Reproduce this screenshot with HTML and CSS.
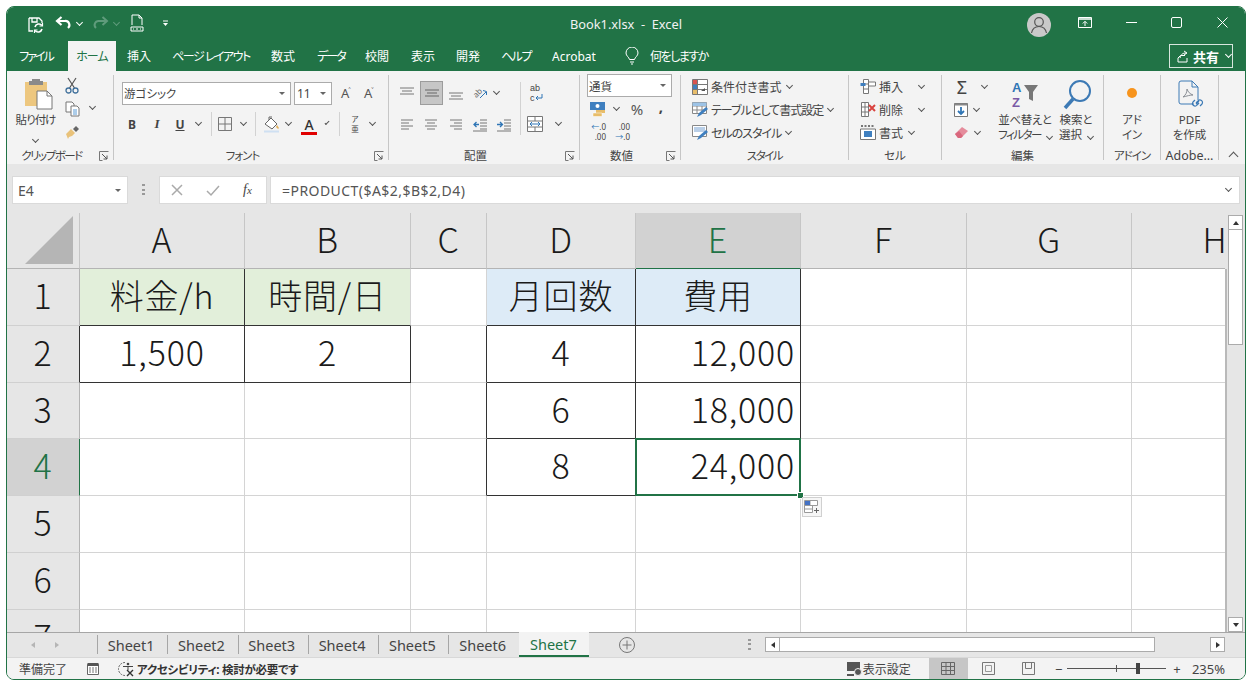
FILE: index.html
```html
<!DOCTYPE HTML>
<html lang="ja">
    <head>
        <meta charset="UTF-8">
        <title>Book1.xlsx - Excel</title>
        <link rel="stylesheet" href="styles.css">
    </head>
    <body>
        <svg class="defs" width="0" height="0">
            <symbol id="top" viewBox="0 0 16 16"><path d="M1 3h14M3 6h10M1 9h14" stroke="#777" fill="none"/></symbol>
            <symbol id="mid" viewBox="0 0 16 16"><path d="M1 5h14M3 8h10M1 11h14" stroke="#666" fill="none"/></symbol>
            <symbol id="bot" viewBox="0 0 16 16"><path d="M1 8h14M3 11h10M1 14h14" stroke="#777" fill="none"/></symbol>
            <symbol id="left" viewBox="0 0 16 16"><path d="M2 4h12M2 7h8M2 10h12M2 13h8" stroke="#777" fill="none"/></symbol>
            <symbol id="center" viewBox="0 0 16 16"><path d="M2 4h12M4 7h8M2 10h12M4 13h8" stroke="#777" fill="none"/></symbol>
            <symbol id="right" viewBox="0 0 16 16"><path d="M2 4h12M6 7h8M2 10h12M6 13h8" stroke="#777" fill="none"/></symbol>
            <symbol id="launch" viewBox="0 0 10 10"><path d="M.5 9.500v-9h9M.5 9.500h3" stroke="#777" fill="none"/><path d="M3 3l5 5M8 4.500V8H4.500" stroke="#555" fill="none"/></symbol>
        </svg>

        <div id="window">
            <!-- タイトルバー -->
            <header class="titlebar">
                <div class="qat">
                    <svg class="q-save" width="18" height="18" viewBox="0 0 18 18"><path d="M2 2h10l3 3v2M2 2v13h4M5 2v4h5V2" fill="none" stroke="#fff" stroke-width="1.300"/><path d="M8 11a4 4 0 0 1 7-1.500M15 13a4 4 0 0 1-7 1.500" fill="none" stroke="#fff" stroke-width="1.600"/><path d="M15.500 7v3h-3M7.500 17v-3h3" fill="none" stroke="#fff" stroke-width="1.200"/></svg>
                    <svg class="q-undo" width="17" height="14" viewBox="0 0 17 14"><path d="M3 5h7a4 4 0 0 1 3 7" fill="none" stroke="#fff" stroke-width="2.200"/><path d="M6.500 1L2 5l4.500 4" fill="none" stroke="#fff" stroke-width="2.200"/></svg>
                    <span class="chev white q-c1"></span>
                    <svg class="q-redo" width="17" height="14" viewBox="0 0 17 14"><path d="M14 5H7a4 4 0 0 0-3 7" fill="none" stroke="#5f9b7b" stroke-width="2"/><path d="M10.500 1L15 5l-4.500 4" fill="none" stroke="#5f9b7b" stroke-width="2"/></svg>
                    <span class="chev dim q-c2"></span>
                    <svg class="q-new" width="14" height="18" viewBox="0 0 14 18"><path d="M2 11V1h7l3 3v7M9 1v3h3" fill="none" stroke="#fff"/><path d="M1 13h12v4H1z" fill="none" stroke="#fff"/><path d="M3 15h1M6 15h2M10 15h1" stroke="#fff"/></svg>
                    <svg class="q-more" width="7" height="7" viewBox="0 0 7 7"><path d="M1 1h5" stroke="#fff"/><path d="M1 3h5L3.500 6z" fill="#fff"/></svg>
                </div>
                <div class="doc-title">Book1.xlsx&nbsp; -&nbsp; Excel</div>
                <div class="win-ctrl">
                    <svg class="avatar" width="24" height="24" viewBox="0 0 24 24"><circle cx="12" cy="12" r="12" fill="#c9c9c9"/><circle cx="12" cy="9" r="4.300" fill="none" stroke="#555" stroke-width="1.200"/><path d="M4.500 20c1-5 4-6.500 7.500-6.500s6.500 1.500 7.500 6.500" fill="none" stroke="#555" stroke-width="1.200"/></svg>
                    <svg class="c-disp" width="14" height="11" viewBox="0 0 14 11"><path d="M.5.500h13v10H.5z" fill="none" stroke="#fff"/><path d="M.5 2h13" stroke="#fff" stroke-width="1.500"/><path d="M7 9V4.500M4.800 6.500L7 4.300l2.200 2.200" fill="none" stroke="#fff"/></svg>
                    <svg class="c-min" width="11" height="11" viewBox="0 0 11 11"><path d="M0 5.500h11" stroke="#fff"/></svg>
                    <svg class="c-max" width="11" height="11" viewBox="0 0 11 11"><rect x=".5" y=".5" width="10" height="10" rx="1.500" fill="none" stroke="#fff"/></svg>
                    <svg class="c-close" width="11" height="11" viewBox="0 0 11 11"><path d="M.5.500l10 10M10.500.500l-10 10" stroke="#fff"/></svg>
                </div>
            </header>

            <!-- タブ -->
            <nav class="tabs">
                <span class="tab file k3">ファイル</span>
                <span class="tab on k1">ホーム</span>
                <span class="tab">挿入</span>
                <span class="tab k2">ページ レイアウト</span>
                <span class="tab">数式</span>
                <span class="tab k3">データ</span>
                <span class="tab">校閲</span>
                <span class="tab">表示</span>
                <span class="tab">開発</span>
                <span class="tab k2">ヘルプ</span>
                <span class="tab">Acrobat</span>
                <span class="tell">
                    <svg width="14" height="18" viewBox="0 0 14 18"><path d="M4.500 12.500C4 10 1 9 1 6a6 6 0 0 1 12 0c0 3-3 4-3.500 6.500z" fill="none" stroke="#fff"/><path d="M5 15h4M6 17h2" stroke="#fff"/></svg>
                    <span class="k2">何をしますか</span>
                </span>
                <span class="share">
                    <svg width="13" height="13" viewBox="0 0 13 13"><path d="M9 5.500H4.500L2 8v4h9V8" fill="none" stroke="#fff"/><path d="M4 8c1-4 3-5 6-5M8 1l3 2-3 2" fill="none" stroke="#fff"/></svg>
                    <b>共有</b>
                    <span class="chev white"></span>
                </span>
            </nav>

            <!-- リボン -->
            <section class="ribbon">
                <div class="group g-clip">
                    <div class="body">
                        <div class="paste">
                            <svg width="30" height="32" viewBox="0 0 30 32"><path d="M1 4h22v24H1z" fill="#edc77f"/><path d="M8 1h8v2h3v4H5V3h3z" fill="#8a8a8a"/><path d="M13 13h10l5 5v13H13z" fill="#fff" stroke="#777"/><path d="M23 13v5h5" fill="none" stroke="#777"/></svg>
                            <span class="k1">貼り付け</span>
                            <span class="chev"></span>
                        </div>
                        <div class="stack tools">
                            <svg width="14" height="17" viewBox="0 0 14 17"><path d="M3 1l6.500 10M11 1L4.500 11" stroke="#555" stroke-width="1.200"/><circle cx="3.500" cy="13.500" r="2.500" fill="none" stroke="#41719c" stroke-width="1.300"/><circle cx="10.500" cy="13.500" r="2.500" fill="none" stroke="#41719c" stroke-width="1.300"/></svg>
                            <svg width="15" height="16" viewBox="0 0 15 16"><path d="M1 1h6l2 2v8H1z" fill="#fff" stroke="#777"/><path d="M6 5h6l2 2v8H6z" fill="#fff" stroke="#777"/><path d="M8 9h4M8 11h4M8 13h4" stroke="#5b9bd5"/></svg>
                            <svg width="15" height="14" viewBox="0 0 15 14"><path d="M1 9l5-5 4 4-3 3-3 1-1 2z" fill="#e9c27a"/><path d="M8 4l3-3 3 3-3 3z" fill="#666"/></svg>
                        </div>
                        <div class="copy-more"><span class="chev"></span></div>
                    </div>
                    <div class="label"><span class="k2">クリップボード</span><svg class="launch"><use href="#launch"/></svg></div>
                </div>

                <div class="group g-font">
                    <div class="body">
                        <div class="font-r1">
                            <div class="combo font-name">游ゴシック<i class="down"></i></div>
                            <div class="combo font-size">11<i class="down"></i></div>
                            <span class="slot grow">A<sup>˄</sup></span>
                            <span class="slot shrink">A<sup>˅</sup></span>
                        </div>
                        <div class="font-r2">
                            <b class="slot fmt">B</b>
                            <i class="slot fmt italic">I</i>
                            <u class="slot fmt">U</u>
                            <span class="slot"><span class="chev"></span></span>
                            <span class="slot"><span class="vsep"></span></span>
                            <span class="slot"><svg width="16" height="16" viewBox="0 0 16 16"><path d="M1.500 1.500h13v13h-13zM8 1.500v13M1.500 8h13" fill="none" stroke="#777"/></svg></span>
                            <span class="slot"><span class="chev"></span></span>
                            <span class="slot"><span class="vsep"></span></span>
                            <span class="slot"><svg width="18" height="18" viewBox="0 0 18 18"><path d="M2 9l6-6 6 6-5 5z" fill="#fff" stroke="#666"/><path d="M6 5V2h3" fill="none" stroke="#666"/><path d="M14 10l2 3-1 1-2-2z" fill="#e3b15c"/><path d="M1 15.500h15v2H1z" fill="#cfe0f2"/></svg></span>
                            <span class="slot"><span class="chev"></span></span>
                            <span class="slot color-a">A<em></em></span>
                            <span class="slot"><span class="chev"></span></span>
                            <span class="slot"><span class="vsep"></span></span>
                            <span class="slot phon"><small>ア</small><small>亜</small></span>
                            <span class="slot"><span class="chev"></span></span>
                        </div>
                    </div>
                    <div class="label"><span class="k1">フォント</span><svg class="launch"><use href="#launch"/></svg></div>
                </div>

                <div class="group g-align">
                    <div class="body">
                        <div class="align-left">
                            <div class="align-r1">
                                <svg class="slot16"><use href="#top"/></svg>
                                <span class="sel"><svg class="slot16"><use href="#mid"/></svg></span>
                                <svg class="slot16"><use href="#bot"/></svg>
                                <svg class="slot16" viewBox="0 0 16 16"><text class="orient" transform="rotate(-45 7 9)" x="2" y="10">ab</text><path d="M8 13l6-6M11 5.500l3.500 1V10" fill="none" stroke="#2f75b5"/></svg>
                                <span class="slot"><span class="chev"></span></span>
                            </div>
                            <div class="align-r2">
                                <svg class="slot16"><use href="#left"/></svg>
                                <svg class="slot16"><use href="#center"/></svg>
                                <svg class="slot16"><use href="#right"/></svg>
                                <svg class="slot16" viewBox="0 0 16 16"><path d="M8 4h7M8 7h7M8 10h7M8 13h7M1 15h14" stroke="#777"/><path d="M7 8.500H2M4.500 6L2 8.500 4.500 11" fill="none" stroke="#2f75b5" stroke-width="1.300"/></svg>
                                <svg class="slot16" viewBox="0 0 16 16"><path d="M8 4h7M8 7h7M8 10h7M8 13h7M1 15h14" stroke="#777"/><path d="M1 8.500h5M4 6l2.500 2.500L4 11" fill="none" stroke="#2f75b5" stroke-width="1.300"/></svg>
                            </div>
                        </div>
                        <span class="vsep tall"></span>
                        <div class="align-right">
                            <div class="align-r3">
                                <span class="wrap">ab<br>c<svg width="8" height="7" viewBox="0 0 8 7"><path d="M7 0v4H1M3 2L1 4l2 2" fill="none" stroke="#2f75b5"/></svg></span>
                            </div>
                            <div class="align-r3">
                                <svg width="16" height="16" viewBox="0 0 16 16"><path d="M.5.500h15v15H.5zM.5 5h15M.5 11h15M8 .5V5M8 11v4.500" fill="#fff" stroke="#777"/><path d="M3 8h10M5 6L3 8l2 2M11 6l2 2-2 2" fill="none" stroke="#2f75b5"/></svg>
                                <span class="chev"></span>
                            </div>
                        </div>
                    </div>
                    <div class="label"><span>配置</span><svg class="launch"><use href="#launch"/></svg></div>
                </div>

                <div class="group g-num">
                    <div class="body">
                        <div class="combo num-fmt">通貨<i class="down"></i></div>
                        <div class="num-r2">
                            <span class="slot"><svg width="16" height="16" viewBox="0 0 16 16"><path d="M0 1h15v8H0z" fill="#3f7fbf"/><circle cx="7.500" cy="5" r="2" fill="#fff"/><path d="M6 9h9v3H6z" fill="#e8bd6a"/><path d="M3 12h9v3.500H3z" fill="#e8bd6a" stroke="#fff" stroke-width=".5"/></svg></span>
                            <span class="slot"><span class="chev"></span></span>
                            <span class="slot pct">%</span>
                            <span class="slot comma">,</span>
                        </div>
                        <div class="num-r3">
                            <span class="dec"><em>←</em>.0<br>.00</span>
                            <span class="dec">.00<br><em>→</em>.0</span>
                        </div>
                    </div>
                    <div class="label"><span>数値</span><svg class="launch"><use href="#launch"/></svg></div>
                </div>

                <div class="group g-style">
                    <div class="body stack">
                        <div class="line">
                            <svg width="16" height="16" viewBox="0 0 16 16"><path d="M.5.500h15v15H.5zM5.500.5v15M.5 5.500h15M.5 10.500h15" fill="#fff" stroke="#777"/><path d="M1 1h4v4H1z" fill="#d9534f"/><path d="M1 6h4v4H1z" fill="#3f7fbf"/><path d="M1 11h4v4H1z" fill="#e8bd6a"/><path d="M9 12l4-3v3z" fill="#555"/></svg>
                            <span>条件付き書式</span><span class="chev"></span>
                        </div>
                        <div class="line">
                            <svg width="16" height="16" viewBox="0 0 16 16"><path d="M.5.500h14v11H.5zM.5 4h14M.5 8h14M5 .5v11M10 .5v11" fill="#fff" stroke="#888"/><path d="M.5.500h14V4H.5z" fill="#9dc3e6"/><path d="M5 15l2-4 7-6 2 2-7 6z" fill="#3f7fbf"/></svg>
                            <span class="k1">テーブルとして書式設定</span><span class="chev"></span>
                        </div>
                        <div class="line">
                            <svg width="16" height="16" viewBox="0 0 16 16"><path d="M.5.500h14v11H.5z" fill="#fff" stroke="#888"/><path d="M2 2h11v5H2z" fill="#b9cfe8"/><path d="M5 15l2-4 7-6 2 2-7 6z" fill="#3f7fbf"/></svg>
                            <span class="k1">セルのスタイル</span><span class="chev"></span>
                        </div>
                    </div>
                    <div class="label center"><span class="k2">スタイル</span></div>
                </div>

                <div class="group g-cell">
                    <div class="body stack">
                        <div class="line">
                            <svg width="16" height="15" viewBox="0 0 16 15"><path d="M3.500.5h5v14h-5zM3.500 5h5M3.500 10h5M8.500 3h7v4h-7z" fill="#fff" stroke="#777"/><path d="M.5 4h5v3h-5z" fill="#3f7fbf"/></svg>
                            <span>挿入</span><span class="chev far"></span>
                        </div>
                        <div class="line">
                            <svg width="16" height="15" viewBox="0 0 16 15"><path d="M1.500.5h7v14h-7zM1.500 5h7M1.500 10h7M5 .5v14" fill="#fff" stroke="#777"/><path d="M9 3l6 6M15 3L9 9" stroke="#d9433f" stroke-width="2"/></svg>
                            <span>削除</span><span class="chev far"></span>
                        </div>
                        <div class="line">
                            <svg width="16" height="15" viewBox="0 0 16 15"><path d="M.5 4h15v10.500H.5z" fill="#fff" stroke="#777"/><path d="M1 1h14" stroke="#777" stroke-dasharray="2 1.500" stroke-width="2"/><path d="M4 6h8v6H4z" fill="#3f7fbf"/></svg>
                            <span>書式</span><span class="chev"></span>
                        </div>
                    </div>
                    <div class="label center"><span>セル</span></div>
                </div>

                <div class="group g-edit">
                    <div class="body">
                        <div class="stack edit-small">
                            <div class="line"><span class="sigma">Σ</span><span class="chev wide"></span></div>
                            <div class="line"><svg width="14" height="14" viewBox="0 0 14 14"><path d="M.5.500h13v13H.5z" fill="#fff" stroke="#777"/><path d="M.5.500h13v2H.5z" fill="#888"/><path d="M7 4v7M4 8l3 3 3-3" fill="none" stroke="#2f75b5" stroke-width="1.800"/></svg><span class="chev"></span></div>
                            <div class="line"><svg width="15" height="13" viewBox="0 0 15 13"><path d="M1 8l7-7 6 4-7 7H4z" fill="#e58c9c"/><path d="M1 8l3 4h3l2-2-4-5z" fill="#d9677d"/></svg><span class="chev"></span></div>
                        </div>
                        <div class="big sort">
                            <svg width="32" height="36" viewBox="0 0 32 36">
                                <text x="3" y="16" class="az a">A</text>
                                <text x="3" y="31" class="az z">Z</text>
                                <path d="M15 9h14l-5 7v9l-4-2v-7z" fill="#777"/>
                            </svg>
                            <span class="half">並べ替えと</span>
                            <span class="k2">フィルター<i class="chev"></i></span>
                        </div>
                        <div class="big find">
                            <svg width="32" height="36" viewBox="0 0 32 36"><circle cx="20" cy="15" r="10" fill="none" stroke="#3d7ab5" stroke-width="2"/><path d="M13 23L5 32" stroke="#3d7ab5" stroke-width="3.500"/></svg>
                            <span>検索と</span>
                            <span>選択<i class="chev"></i></span>
                        </div>
                    </div>
                    <div class="label center"><span>編集</span></div>
                </div>

                <div class="group g-addin">
                    <div class="body big">
                        <svg width="32" height="36" viewBox="0 0 32 36"><circle cx="16" cy="17" r="5" fill="#f7941d"/></svg>
                        <span>アド</span>
                        <span>イン</span>
                    </div>
                    <div class="label center"><span class="k1">アドイン</span></div>
                </div>

                <div class="group g-adobe">
                    <div class="body big">
                        <svg width="30" height="36" viewBox="0 0 30 36"><path d="M6 5h11l6 6v13M19 28H6a2 2 0 0 1-2-2V7a2 2 0 0 1 2-2" fill="none" stroke="#3d7ab5"/><path d="M17 5v6h6" fill="none" stroke="#3d7ab5"/><path d="M8 21c3-2 4-5 4-8 1 3 3 5 6 6-3 0-6 1-10 2z" fill="none" stroke="#8a8f96"/><path d="M21 27l2-2a2.500 2.500 0 0 1 4 3l-2 2M24 27l-2 2a2.500 2.500 0 0 1-4-3l2-2M21 28l3-3" fill="none" stroke="#3d7ab5" stroke-width="1.200"/></svg>
                        <span>PDF</span>
                        <span>を作成</span>
                    </div>
                    <div class="label center adobe-label"><span>Adobe…</span></div>
                </div>

                <div class="collapse"><span class="chev up"></span></div>
            </section>

            <!-- 数式バー -->
            <section class="formula">
                <div class="namebox">E4<i class="down"></i></div>
                <div class="fdots"></div>
                <div class="fbtns">
                    <svg width="14" height="14" viewBox="0 0 14 14"><path d="M2 2l10 10M12 2L2 12" stroke="#aaa" stroke-width="1.500"/></svg>
                    <svg width="16" height="14" viewBox="0 0 16 14"><path d="M2 8l4 4 8-9" fill="none" stroke="#aaa" stroke-width="1.500"/></svg>
                    <span class="fx">f<small>x</small></span>
                </div>
                <div class="finput"><span>=PRODUCT($A$2,$B$2,D4)</span><i class="chev"></i></div>
            </section>

            <!-- シート -->
            <section class="sheet">
                <div class="grid">
                    <div class="hd corner"><svg width="50" height="50" viewBox="0 0 50 50"><path d="M48 0v48H0z" fill="#b5b5b5"/></svg></div>
                    <div class="hd">A</div><div class="hd">B</div><div class="hd">C</div><div class="hd">D</div>
                    <div class="hd cur">E</div><div class="hd">F</div><div class="hd">G</div><div class="hd h-col">H</div>

                    <div class="hd rw">1</div>
                    <div class="c green lr lb">料金/h</div><div class="c green lb">時間/日</div><div class="c"></div>
                    <div class="c blue lr lb">月回数</div><div class="c blue lr lb">費用</div><div class="c"></div><div class="c"></div><div class="c"></div>

                    <div class="hd rw lr">2</div>
                    <div class="c lr lb">1,500</div><div class="c lr lb">2</div><div class="c lr"></div>
                    <div class="c lr lb">4</div><div class="c lr lb num">12,000</div><div class="c"></div><div class="c"></div><div class="c"></div>

                    <div class="hd rw">3</div>
                    <div class="c"></div><div class="c"></div><div class="c lr"></div>
                    <div class="c lr lb">6</div><div class="c lr lb num">18,000</div><div class="c"></div><div class="c"></div><div class="c"></div>

                    <div class="hd rw cur cur-r">4</div>
                    <div class="c"></div><div class="c"></div><div class="c lr"></div>
                    <div class="c lr lb">8</div>
                    <div class="c num active">24,000
                        <span class="handle"></span>
                        <span class="paste-opt"><svg width="16" height="14" viewBox="0 0 16 14"><path d="M.5.500h13v5H.5zM.5 5.500h8v7h-8zM.5 9h8M6 .5v5" fill="#fff" stroke="#999"/><path d="M1 1h5v4H1z" fill="#4472c4"/><path d="M10 10.500h5M12.500 8v5" stroke="#666"/></svg></span>
                    </div>
                    <div class="c"></div><div class="c"></div><div class="c"></div>

                    <div class="hd rw">5</div>
                    <div class="c"></div><div class="c"></div><div class="c"></div><div class="c"></div><div class="c"></div><div class="c"></div><div class="c"></div><div class="c"></div>

                    <div class="hd rw">6</div>
                    <div class="c"></div><div class="c"></div><div class="c"></div><div class="c"></div><div class="c"></div><div class="c"></div><div class="c"></div><div class="c"></div>

                    <div class="hd rw">7</div>
                    <div class="c"></div><div class="c"></div><div class="c"></div><div class="c"></div><div class="c"></div><div class="c"></div><div class="c"></div><div class="c"></div>
                </div>
                <div class="vscroll">
                    <span class="sb-btn"><i class="tri up"></i></span>
                    <span class="thumb"></span>
                    <span class="sb-btn low"><i class="tri dn"></i></span>
                </div>
            </section>

            <!-- シート見出し -->
            <section class="sheetbar">
                <div class="sheet-nav"><i class="tri lf dim"></i><i class="tri rt dim"></i></div>
                <span class="stab">Sheet1</span>
                <span class="stab">Sheet2</span>
                <span class="stab">Sheet3</span>
                <span class="stab">Sheet4</span>
                <span class="stab">Sheet5</span>
                <span class="stab">Sheet6</span>
                <span class="stab on">Sheet7</span>
                <div class="add"><svg width="16" height="16" viewBox="0 0 16 16"><circle cx="8" cy="8" r="7.500" fill="none" stroke="#777"/><path d="M8 3.500v9M3.500 8h9" stroke="#777"/></svg></div>
                <div class="sdots"></div>
                <div class="hscroll">
                    <span class="sb-btn side"><i class="tri lf"></i></span>
                    <span class="hthumb"></span>
                    <span class="sb-btn side"><i class="tri rt"></i></span>
                </div>
            </section>

            <!-- ステータスバー -->
            <footer class="status">
                <span class="ready">準備完了</span>
                <svg class="st-macro" width="12" height="13" viewBox="0 0 12 13"><path d="M.5 2.500h11v10H.5z" fill="#fff" stroke="#666"/><path d="M.5 1h11v3H.5z" fill="#555"/><path d="M2 6h2M5 6h2M8 6h2M2 8h2M5 8h2M8 8h2M2 10h2M5 10h2M8 10h2" stroke="#777"/></svg>
                <svg class="st-acc" width="18" height="16" viewBox="0 0 18 16"><path d="M7 1.500a6.500 6.500 0 0 0 0 13" fill="none" stroke="#666" stroke-dasharray="2 1"/><circle cx="10" cy="3" r="1.300" fill="#444"/><path d="M5 5.500h10M10 5.500V9" stroke="#444"/><path d="M9 9l6 6M15 9l-6 6" stroke="#333" stroke-width="1.400"/></svg>
                <b class="acc-text">アクセシビリティ: 検討が必要です</b>
                <span class="disp">
                    <svg width="17" height="16" viewBox="0 0 17 16"><path d="M1 1h13v9H1z" fill="#555"/><circle cx="12" cy="11" r="3.500" fill="#555" stroke="#f3f3f3"/><path d="M1 14h7" stroke="#555" stroke-width="2"/></svg>
                    表示設定
                </span>
                <span class="view on"><svg width="14" height="13" viewBox="0 0 14 13"><path d="M.5.500h13v12H.5zM.5 4.500h13M.5 8.500h13M5 .5v12M9.500.5v12" fill="none" stroke="#666"/></svg></span>
                <span class="view"><svg width="13" height="13" viewBox="0 0 13 13"><path d="M.5.500h12v12H.5z" fill="none" stroke="#777"/><path d="M3.500 3.500h6v6h-6z" fill="none" stroke="#999"/></svg></span>
                <span class="view"><svg width="13" height="13" viewBox="0 0 13 13"><path d="M.5.500h12v12H.5zM3.500.5v6h6v-6" fill="none" stroke="#777"/></svg></span>
                <span class="zm-minus">−</span>
                <span class="slider"><i class="tick"></i><i class="knob"></i></span>
                <span class="zm-plus">+</span>
                <span class="zm-val">235%</span>
            </footer>
        </div>
    </body>
</html>
```

FILE: styles.css
```css
html,body{margin:0;padding:0;background:#fff;}
body{
    font-family:"Noto Sans","Noto Sans CJK JP",sans-serif;
    font-size:12px;
    font-feature-settings:"palt";
    color:#444;
}
.defs{position:absolute;}
i,em{font-style:normal;}

/* カナの字詰め */
.half{letter-spacing:-.4px;}
.k1{letter-spacing:-1px;}
.k2{letter-spacing:-1.500px;}
.k3{letter-spacing:-2px;}

#window{
    display:flex;
    flex-direction:column;
    box-sizing:border-box;
    width:1240px;
    height:674px;
    margin:6px;
    overflow:hidden;
    border:1px solid #217346;
    border-radius:8px;
    background:#f3f3f3;
}

/* 共通 */
.chev{
    display:inline-block;
    box-sizing:border-box;
    width:5px;
    height:5px;
    margin-top:-3px;
    border-right:1px solid #555;
    border-bottom:1px solid #555;
    transform:rotate(45deg);
}
.chev.white{border-color:#fff;}
.chev.dim{border-color:#5f9b7b;}
.chev.up{margin-top:3px;transform:rotate(225deg);width:7px;height:7px;}
.down{
    width:0;
    height:0;
    border-left:3px solid transparent;
    border-right:3px solid transparent;
    border-top:3px solid #666;
}
.slot{display:flex;align-items:center;justify-content:center;min-width:0;}
.slot16{width:16px;height:16px;justify-self:center;overflow:visible;}
.vsep{display:block;flex:none;width:1px;height:24px;background:#d2d2d2;}
.vsep.tall{height:53px;margin:7px 0 0 3px;}

/* タイトルバー */
.titlebar{
    display:grid;
    grid-template-columns:1fr auto 1fr;
    align-items:center;
    height:34px;
    flex:none;
    background:#217346;
    color:#fff;
}
.qat{display:flex;align-items:center;padding-left:20px;}
.q-save{margin:2px 0 0 0;}
.q-undo{margin:-3px 0 0 10px;}
.q-c1{margin:-3px 0 0 5px;}
.q-redo{margin:-3px 0 0 10px;}
.q-c2{margin:-3px 0 0 5px;}
.q-new{margin:-3px 0 0 11px;}
.q-more{margin:-1px 0 0 18px;}
.doc-title{font-size:12.800px;color:#f2f2f2;}
.win-ctrl{display:flex;align-items:center;justify-content:flex-end;padding-right:17px;margin-top:2px;}
.c-disp{margin:-5px 0 0 27px;}
.c-min{margin:-5px 0 0 34px;}
.c-max{margin:-5px 0 0 34px;}
.c-close{margin:-5px 0 0 35px;}

/* タブ */
.tabs{
    display:grid;
    grid-template-columns:61px 48px 46px 98px 46px 50px 42px 50px 40px 56px 60px auto 1fr;
    height:30px;
    flex:none;
    background:#217346;
    color:#fff;
}
.tab{display:flex;align-items:center;justify-content:center;font-size:12px;white-space:nowrap;}
.tab.file{padding-right:3px;}
.tab.on{background:#f3f3f3;color:#217346;}
.tell{display:flex;align-items:center;gap:11px;padding-left:21px;}
.share{
    display:flex;
    align-items:center;
    justify-self:end;
    gap:4px;
    box-sizing:border-box;
    width:64px;
    height:24px;
    margin:3px 12px 0 0;
    padding-left:6px;
    border:1px solid #d8e6de;
    font-size:13px;
}
.share .chev{margin-left:3px;}

/* リボン */
.ribbon{display:flex;flex:none;height:93px;box-sizing:border-box;padding-top:4px;background:#f3f3f3;}
.group{
    display:flex;
    flex-direction:column;
    flex:none;
    box-sizing:border-box;
    height:85px;
    border-right:1px solid #c6c6c6;
}
.body{height:73px;flex:none;}
.label{display:flex;align-items:center;height:16px;margin-bottom:-4px;line-height:16px;font-size:11.500px;color:#444;}
.label span{flex:1;text-align:center;white-space:nowrap;}
.adobe-label{font-size:12.500px;}
.launch{flex:none;width:10px;height:10px;margin:0 4px 0 3px;}
.g-clip{width:107px;}
.g-font{width:275px;}
.g-align{width:191px;}
.g-num{width:101px;}
.g-style{width:168px;}
.g-cell{width:93px;}
.g-edit{width:162px;}
.g-addin{width:57px;}
.g-adobe{width:58px;}

.stack{display:grid;grid-template-rows:repeat(3,23px);align-items:center;}
.line{display:flex;align-items:center;white-space:nowrap;}
.line svg{flex:none;}
.line .chev{margin-left:6px;}

.g-clip .body{display:flex;}
.paste{display:flex;flex-direction:column;align-items:center;width:49px;margin-left:4px;line-height:16px;font-size:11.500px;white-space:nowrap;}
.paste svg{margin:3px 0 2px 7px;}
.paste .chev{margin-top:9px;}
.tools{width:24px;margin-top:-1px;justify-items:center;}
.copy-more{display:flex;align-items:center;height:65px;margin-left:6px;}

.font-r1{display:flex;align-items:center;height:24px;margin:6px 0 7px 8px;}
.combo{
    display:flex;
    align-items:center;
    justify-content:space-between;
    box-sizing:border-box;
    height:23px;
    padding:0 5px 0 1px;
    border:1px solid #ababab;
    background:#fff;
    font-size:11.500px;
}
.font-name{width:169px;margin-right:3px;}
.font-size{width:38px;padding-left:2px;font-size:12px;}
.grow{width:28px;}
.shrink{width:18px;}
.grow,.shrink{font-size:13px;color:#555;}
.grow sup,.shrink sup{font-size:9px;line-height:1;margin:-5px 0 0 -1px;}
.font-r2{
    display:grid;
    grid-template-columns:20px 30px 16px 20px 6px 22px 14px 10px 24px 8px 34px 2px 22px 10px 24px;
    height:24px;
    margin-left:8px;
    align-items:center;
}
.fmt{font-family:"Liberation Serif",serif;font-size:13px;color:#444;}
b.fmt,u.fmt{font-family:"Noto Sans",sans-serif;font-size:12px;font-weight:700;}
.italic{font-weight:700;font-style:italic;}
.color-a{position:relative;font-size:14px;font-weight:500;height:20px;color:#333;}
.color-a em{position:absolute;left:9px;right:9px;bottom:-1px;height:3px;background:#e00000;}
.phon{flex-direction:column;line-height:10px;}
.phon small{font-size:7.500px;}

.g-align .body{display:flex;}
.align-left{width:122px;margin-left:6px;}
.align-r1,.align-r2{display:grid;align-items:center;height:24px;}
.align-r1{grid-template-columns:24px 24px 26px 22px 10px;margin-top:6px;margin-bottom:7px;}
.align-r2{grid-template-columns:24px 24px 26px 22px 26px;}
.orient{font-size:8px;fill:#666;}
.sel{
    display:flex;
    align-items:center;
    justify-content:center;
    justify-self:end;
    box-sizing:border-box;
    width:23px;
    height:24px;
    border:1px solid #9c9c9c;
    background:#c6c6c6;
}
.align-right{margin-left:6px;}
.align-r3{display:flex;align-items:center;height:24px;margin-top:6px;}
.align-r3 + .align-r3{margin-top:7px;}
.align-r3 .chev{margin-left:13px;}
.wrap{display:block;line-height:10.500px;font-family:"Liberation Sans",sans-serif;font-size:9px;color:#444;padding-left:3px;}

.num-fmt{width:85px;margin:-1px 0 0 7px;}
.num-r2{display:grid;grid-template-columns:22px 14px 28px 20px;align-items:center;height:20px;margin:2px 0 3px 7px;}
.pct{font-size:15px;color:#555;}
.comma{font-size:15px;font-weight:700;margin-top:-6px;}
.num-r3{display:flex;height:22px;margin-left:8px;gap:6px;}
.dec{display:block;width:18px;line-height:10px;font-size:8px;text-align:right;}
.dec em{color:#2f75b5;}

.g-style .stack{padding-left:11px;}
.g-style .line span:first-of-type{margin-left:3px;}
.g-style .line .chev{margin-left:5px;}
.g-cell .stack{padding-left:11px;}
.g-cell .line svg + span{margin-left:3px;}
.g-cell .chev.far{margin-left:16px;}

.g-edit .body{display:flex;}
.edit-small{width:53px;padding-left:10px;box-sizing:border-box;}
.sigma{width:20px;font-size:18px;line-height:20px;color:#444;text-align:center;}
.chev.wide{margin-left:10px;}
.edit-small .line svg{margin-left:2px;}
.big{display:flex;flex-direction:column;align-items:center;line-height:15px;font-size:11.500px;white-space:nowrap;}
.big svg{flex:none;margin:1px 0 0;}
.big .chev{margin-left:6px;}
.sort{width:60px;}
.find{width:42px;}
.az{font:700 13px "Liberation Sans",sans-serif;}
.az.a{fill:#2f75b5;}
.az.z{fill:#7a5aa6;}
.collapse{flex:1;display:flex;align-items:flex-end;justify-content:center;height:85px;padding-left:2px;}

/* 数式バー */
.formula{
    display:flex;
    flex:none;
    box-sizing:border-box;
    height:49px;
    padding:12px 5px 9px 5px;
    background:#e6e6e6;
}
.namebox,.fbtns,.finput{display:flex;align-items:center;box-sizing:border-box;height:28px;background:#fff;border:1px solid #dadada;}
.namebox{justify-content:space-between;width:116px;padding:0 6px 0 5px;font-size:14px;color:#555;}
.fdots{width:3px;height:11px;margin:8px 14px 0 14px;background:repeating-linear-gradient(#999 0 2px,transparent 2px 4.500px);}
.fbtns{width:108px;padding-left:10px;gap:21px;}
.fx{font:italic 14px "Liberation Serif",serif;color:#444;margin-left:1px;}
.fx small{font-size:11px;}
.finput{flex:1;margin-left:3px;padding:0 8px 0 11px;justify-content:space-between;font-size:14px;letter-spacing:.45px;color:#555;}

/* シート */
.sheet{display:flex;flex:none;height:419px;overflow:hidden;background:#e6e6e6;}
.grid{
    display:grid;
    grid-template-columns:73px 165px 166px 76px 149px 165px 166px 165px 166px;
    grid-template-rows:56px 57px 57px 56px 57px 57px 57px 57px;
    font-family:"Noto Sans CJK JP",sans-serif;
    font-size:34px;
    font-weight:300;
    letter-spacing:.8px;
    font-feature-settings:normal;
    color:#1a1a1a;
    flex:none;
    width:1218px;
    height:419px;
    overflow:hidden;
}
.hd,.c{display:flex;align-items:center;justify-content:center;box-sizing:border-box;padding-bottom:5px;}
.hd{background:#e6e6e6;border-right:1px solid #c6c6c6;border-bottom:1px solid #b4b4b4;}
.hd.h-col{border-right:0;}
.hd.rw{border-bottom:1px solid #d0d0d0;border-right:1px solid #b4b4b4;}
.corner{align-items:flex-end;justify-content:flex-end;padding:0 4px 2px 0;}
.hd.cur{background:#d2d2d2;color:#217346;border-bottom:1px solid #217346;}
.hd.cur-r{border-right:1px solid #217346;border-bottom:1px solid #d0d0d0;}
.c{position:relative;background:#fff;border-right:1px solid #d4d4d4;border-bottom:1px solid #d4d4d4;}
.green{background:#e2efda;}
.blue{background:#ddebf7;}
.hd.lr,.c.lr{border-right-color:#333;}
.c.lb{border-bottom-color:#333;}
.num{justify-content:flex-end;padding-right:5px;}
.active::after{
    content:"";
    position:absolute;
    top:-1px;
    left:-1px;
    right:-1px;
    bottom:-1px;
    border:2px solid #217346;
}
.handle{
    position:absolute;
    right:-4px;
    bottom:-4px;
    z-index:2;
    width:5px;
    height:5px;
    border:1px solid #fff;
    background:#217346;
}
.paste-opt{
    position:absolute;
    left:166px;
    top:58px;
    z-index:2;
    display:flex;
    align-items:center;
    justify-content:center;
    box-sizing:border-box;
    width:20px;
    height:20px;
    border:1px solid #d0d0d0;
    background:#f6f6f6;
}

.vscroll{
    display:flex;
    flex-direction:column;
    flex:none;
    box-sizing:border-box;
    width:20px;
    padding:2px 2px 0 3px;
    background:linear-gradient(#e6e6e6 56px,#b9b9b9 56px) left/2px 100% no-repeat,#e6e6e6;
}
.sb-btn{
    display:flex;
    align-items:center;
    justify-content:center;
    flex:none;
    box-sizing:border-box;
    width:15px;
    height:15px;
    border:1px solid #ababab;
    background:#fff;
}
.thumb{box-sizing:border-box;height:116px;margin-top:-1px;border:1px solid #ababab;background:#fff;}
.sb-btn.low{margin-top:auto;}
.tri{width:0;height:0;border:3px solid transparent;}
.tri.up{border-top:0;border-bottom:4px solid #333;}
.tri.dn{border-bottom:0;border-top:4px solid #333;}
.tri.lf{border-left:0;border-right:4px solid #333;}
.tri.rt{border-right:0;border-left:4px solid #333;}
.tri.lf.dim{border-right-color:#b5b5b5;}
.tri.rt.dim{border-left-color:#b5b5b5;}

/* シート見出し */
.sheetbar{
    display:flex;
    align-items:stretch;
    flex:none;
    box-sizing:border-box;
    height:25px;
    border-top:1px solid #a6a6a6;
    background:#e6e6e6;
    font-size:14.500px;
}
.sheet-nav{display:flex;flex:none;align-items:center;box-sizing:border-box;width:90px;padding-left:24px;gap:20px;}
.stab{
    display:flex;
    flex:none;
    align-items:center;
    justify-content:center;
    box-sizing:border-box;
    width:70.300px;
    margin:2px 0 3px;
    padding-right:3px;
    border-left:1px solid #a6a6a6;
    color:#444;
}
.stab.on{margin:-1px 0 0;padding-right:1px;border-left:0;border-bottom:2px solid #217346;background:#f3f3f3;color:#217346;}
.add{display:flex;flex:none;align-items:center;padding-left:30px;width:46px;}
.sdots{flex:none;width:3px;height:11px;margin:6px 0 0 83px;background:repeating-linear-gradient(#999 0 2px,transparent 2px 4.500px);}
.hscroll{display:flex;flex:none;align-items:center;box-sizing:border-box;width:460px;margin-left:14px;padding-bottom:1px;}
.hthumb{box-sizing:border-box;width:376px;height:15px;margin-left:-1px;border:1px solid #ababab;background:#fff;}
.sb-btn.side:last-child{margin-left:auto;}

/* ステータスバー */
.status{
    display:flex;
    align-items:center;
    flex:none;
    height:22px;
    background:#f3f3f3;
    border-top:1px solid #d8d8d8;
    box-sizing:border-box;
    font-size:12px;
}
.ready{margin-left:12px;width:68px;white-space:nowrap;}
.st-macro{flex:none;}
.st-acc{flex:none;margin-left:19px;}
.acc-text{margin-left:1px;font-size:11.500px;font-weight:700;letter-spacing:-.3px;color:#333;white-space:nowrap;}
.disp{display:flex;align-items:center;margin-left:auto;gap:0;white-space:nowrap;}
.view{display:flex;align-items:center;justify-content:center;box-sizing:border-box;width:39px;height:21px;}
.view.on{margin-left:18px;background:#c6c6c6;}
.view + .view{margin-left:1px;}
.zm-minus{margin-left:7px;font-size:13px;width:12px;}
.slider{position:relative;width:99px;height:1px;background:#555;margin-left:0;}
.tick{position:absolute;left:49px;top:-3px;width:1px;height:7px;background:#555;}
.knob{position:absolute;left:69px;top:-5px;width:4px;height:11px;background:#444;}
.zm-plus{margin-left:5px;font-size:13px;width:12px;text-align:center;}
.zm-val{margin:0 20px 0 9px;font-size:13px;}
```
